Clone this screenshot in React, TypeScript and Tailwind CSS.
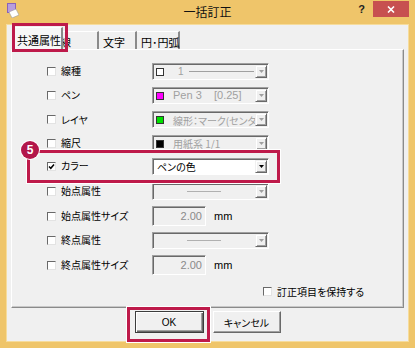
import React from "react";

const FONT = { fontFamily: '"Noto Sans CJK JP", "Noto Sans", sans-serif', fontFeatureSettings: '"palt"' };

function Arrow({ enabled }: { enabled?: boolean }) {
  return (
    <svg width="5" height="3" viewBox="0 0 5 3">
      <polygon points="0,0 5,0 2.5,3" fill={enabled ? "#000000" : "#a0a0a0"} />
    </svg>
  );
}

function Combo({ children, enabled }: { children?: React.ReactNode; enabled?: boolean }) {
  return (
    <div
      className={
        enabled
          ? "flex h-[17px] w-[117px] border border-t-[#a0a0a0] border-l-[#a0a0a0] border-b-white border-r-white bg-white shadow-[inset_1px_1px_0_#696969]"
          : "flex h-[17px] w-[117px] border border-t-[#a0a0a0] border-l-[#a0a0a0] border-b-white border-r-white bg-[#f0f0f0] shadow-[inset_1px_1px_0_#696969]"
      }
    >
      <div className="flex min-w-0 flex-1 items-center overflow-hidden whitespace-nowrap pl-[3px] pt-[1px]">{children}</div>
      <div className="my-[1px] mr-[1px] flex w-[12px] items-center justify-center border border-t-[#f0f0f0] border-l-[#f0f0f0] border-b-[#696969] border-r-[#696969] bg-[#f0f0f0] shadow-[inset_1px_1px_0_#ffffff,inset_-1px_-1px_0_#a0a0a0]">
        <Arrow enabled={enabled} />
      </div>
    </div>
  );
}

function Swatch({ color }: { color: string }) {
  return <div className="h-[8px] w-[8px] shrink-0 border border-[#333]" style={{ background: color }} />;
}

function Check({ checked }: { checked?: boolean }) {
  return (
    <div className="flex h-[9px] w-[9px] shrink-0 items-center justify-center border border-t-[#696969] border-l-[#696969] border-b-[#e3e3e3] border-r-[#e3e3e3] bg-white">
      {checked && (
        <svg width="7" height="7" viewBox="0 0 7 7">
          <polyline points="1,3.5 2.8,5.3 6,1.5" fill="none" stroke="#000" strokeWidth="1.5" />
        </svg>
      )}
    </div>
  );
}

function Row({ h, label, checked, children }: { h: string; label: string; checked?: boolean; children?: React.ReactNode }) {
  return (
    <div className={"flex items-center " + h}>
      <Check checked={checked} />
      <div className="ml-[5px] w-[91px] whitespace-nowrap text-[10px] leading-[12px] text-black">{label}</div>
      {children}
    </div>
  );
}

function TextBox({ value }: { value: string }) {
  return (
    <div className="flex items-center">
      <div className="flex h-[20px] w-[54px] items-center justify-end border border-t-[#a0a0a0] border-l-[#a0a0a0] border-b-white border-r-white bg-[#f0f0f0] pr-[3px] text-[11px] text-[#8a8a8a] shadow-[inset_1px_1px_0_#696969]" style={{ fontFamily: '"Liberation Sans", sans-serif' }}>
        {value}
      </div>
      <div className="ml-[8px] text-[11px] text-black" style={{ fontFamily: '"Liberation Sans", sans-serif' }}>mm</div>
    </div>
  );
}

function LineOnly() {
  return (
    <div className="flex w-full justify-center pr-[4px]">
      <div className="h-[1px] w-[34px] bg-[#b0b0b0]" />
    </div>
  );
}

export default function App() {
  return (
    <div className="relative flex h-[348px] w-[415px] flex-col bg-[#efc56a] px-[6px] pb-[6px]" style={FONT}>
      {/* title bar */}
      <div className="grid h-[24px] grid-cols-[1fr_auto_1fr]">
        <div className="flex items-start pl-[1px] pt-[3px]">
          <svg width="12" height="15" viewBox="0 0 12 15">
            <rect x="0" y="0" width="9" height="10" fill="#8a63b8" />
            <rect x="1" y="1" width="7" height="8" fill="#b79ddc" />
            <polygon points="2,9 9,6 12,12 5,15" fill="#ffffff" stroke="#9a9a9a" strokeWidth="0.6" />
          </svg>
        </div>
        <div className="pt-[5px] text-[12px] leading-[14px] text-[#111]">一括訂正</div>
        <div className="flex items-start justify-end">
          <div className="mr-[8px] pt-[3px] text-[11px] font-bold leading-[12px] text-[#222]" style={{ fontFamily: '"Liberation Sans", sans-serif' }}>?</div>
          <div className="mt-[1px] flex h-[16px] w-[36px] items-center justify-center bg-[#c75050]">
            <svg width="8" height="7" viewBox="0 0 8 7">
              <path d="M1 0.5 L7 6.5 M7 0.5 L1 6.5" stroke="#fff" strokeWidth="1.6" />
            </svg>
          </div>
        </div>
      </div>

      {/* client */}
      <div className="flex flex-1 flex-col border border-[#f6dc9c] bg-[#f0f0f0] px-[4px] pt-[2px]">
        {/* tabs */}
        <div className="relative z-10 flex h-[22px] items-start whitespace-nowrap pl-[2px] text-[11px] leading-[13px] text-black">
          <div className="relative z-10 flex h-[23px] w-[50px] shrink-0 items-start border-l border-t border-white border-r-2 border-r-[#8a8a8a] bg-[#f7f7f7] pl-[3px] pt-[6px]">共通属性</div>
          <div className="mt-[4px] flex h-[18px] w-[36px] shrink-0 items-start border-r-2 border-t border-t-white border-r-[#8a8a8a] pt-[4px]">
            <span className="-ml-[3px]">線</span>
          </div>
          <div className="mt-[4px] flex h-[18px] w-[38px] shrink-0 items-start border-r-2 border-t border-t-white border-r-[#8a8a8a] pl-[4px] pt-[4px]">文字</div>
          <div className="mt-[4px] flex h-[18px] w-[43px] shrink-0 items-start border-r-2 border-t border-t-white border-r-[#8a8a8a] pl-[4px] pt-[4px]">円･円弧</div>
        </div>

        {/* panel */}
        <div className="flex h-[259px] flex-col border border-t-white border-l-white border-b-[#8a8a8a] border-r-[#8a8a8a] pl-[35px] pt-[9px] shadow-[inset_-1px_-1px_0_#c8c8c8]">
          <Row h="h-[24px]" label="線種">
            <Combo>
              <Swatch color="#ffffff" />
              <span className="ml-[14px] text-[10px] text-[#a0a0a0]" style={{ fontFamily: '"Liberation Sans", sans-serif' }}>1</span>
              <div className="ml-[5px] h-[1px] w-[65px] bg-[#a0a0a0]" />
            </Combo>
          </Row>
          <Row h="h-[24px]" label="ペン">
            <Combo>
              <Swatch color="#ff00ff" />
              <span className="ml-[9px] whitespace-pre text-[11px] text-[#a0a0a0]" style={{ fontFamily: '"Liberation Sans", sans-serif' }}>{"Pen 3    [0.25]"}</span>
            </Combo>
          </Row>
          <Row h="h-[25px]" label="レイヤ">
            <Combo>
              <Swatch color="#00e000" />
              <span className="ml-[9px] text-[10px] text-[#a0a0a0]">線形：マーク(センター</span>
            </Combo>
          </Row>
          <Row h="h-[22px]" label="縮尺">
            <Combo>
              <Swatch color="#000000" />
              <span className="ml-[9px] text-[10px] text-[#a0a0a0]">用紙系 1/1</span>
            </Combo>
          </Row>
          <Row h="h-[24px]" label="カラー" checked>
            <Combo enabled>
              <span className="ml-[1px] text-[10px] text-black">ペンの色</span>
            </Combo>
          </Row>
          <Row h="h-[26px]" label="始点属性">
            <Combo>
              <LineOnly />
            </Combo>
          </Row>
          <Row h="h-[24px]" label="始点属性サイズ">
            <TextBox value="2.00" />
          </Row>
          <Row h="h-[24px]" label="終点属性">
            <Combo>
              <LineOnly />
            </Combo>
          </Row>
          <Row h="h-[26px]" label="終点属性サイズ">
            <TextBox value="2.00" />
          </Row>
          <div className="mt-[5px] flex h-[16px] items-center pl-[216px]">
            <Check />
            <div className="ml-[5px] whitespace-nowrap text-[10px] text-black">訂正項目を保持する</div>
          </div>
        </div>

        {/* buttons */}
        <div className="mt-[3px] flex justify-center gap-[9px] text-[10px] text-black">
          <div className="flex h-[22px] w-[69px] items-center justify-center border border-[#3c3c3c] bg-[#f0f0f0] shadow-[inset_1px_1px_0_#ffffff,inset_-1px_-1px_0_#696969,inset_-2px_-2px_0_#a0a0a0]" style={{ fontFamily: '"Liberation Sans", sans-serif' }}>OK</div>
          <div className="flex h-[22px] w-[68px] items-center justify-center border border-t-white border-l-white border-b-[#696969] border-r-[#696969] bg-[#f0f0f0] shadow-[inset_-1px_-1px_0_#a0a0a0]">キャンセル</div>
        </div>
      </div>

      {/* annotation overlays */}
      <div className="pointer-events-none absolute left-[12px] top-[23px] z-20 h-[29px] w-[56px] border-[3px] border-[#be1a4a]" />
      <div className="pointer-events-none absolute left-[27px] top-[150px] z-20 h-[33px] w-[253px] border-[3px] border-[#be1a4a] shadow-[0_0_0_1px_#ffffff]" />
      <div className="pointer-events-none absolute left-[127px] top-[307px] z-20 h-[35px] w-[83px] border-[3px] border-[#be1a4a] shadow-[0_0_0_1px_#ffffff]" />
      <div className="absolute left-[21px] top-[141px] z-30 flex h-[18px] w-[18px] items-center justify-center rounded-full bg-[#b3164a] text-[12px] font-bold leading-none text-white shadow-[0_0_0_1px_#ffffff]" style={{ fontFamily: '"Liberation Sans", sans-serif' }}>5</div>
    </div>
  );
}
